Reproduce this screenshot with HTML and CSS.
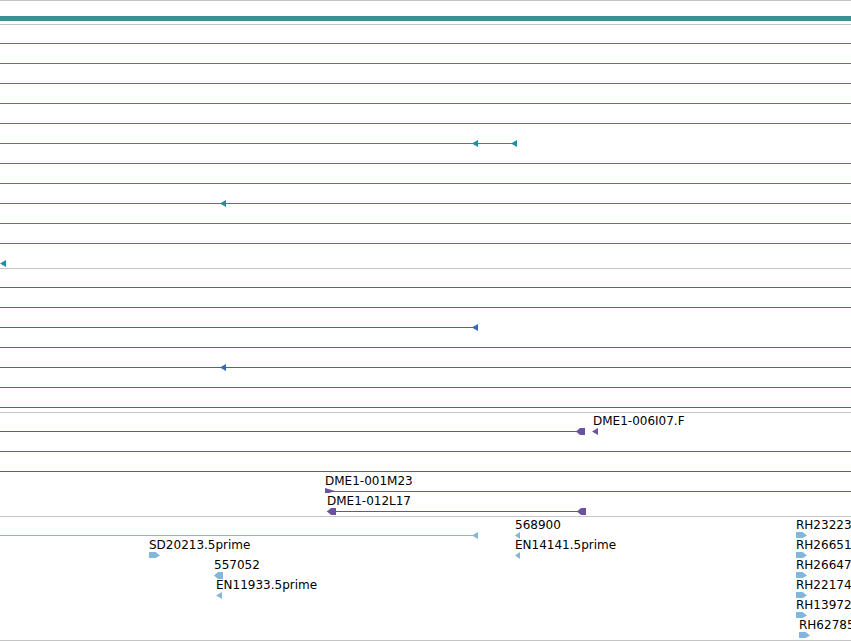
FILE: index.html
```html
<!DOCTYPE HTML>
<html>

<head>
    <meta charset="utf-8">
    <title>tracks</title>
    <link rel="stylesheet" href="styles.css">
</head>

<body>
<div class="view">
    <div class="topline"></div>
    <div class="ruler"></div>

    <!-- track 1 -->
    <div class="track teal">
        <div class="row"><i class="ln full"></i></div>
        <div class="row"><i class="ln full"></i></div>
        <div class="row"><i class="ln full"></i></div>
        <div class="row"><i class="ln full"></i></div>
        <div class="row"><i class="ln full"></i></div>
        <div class="row">
            <i class="ln" style="left:0;width:517px"></i>
            <i class="ar left" style="left:472px"></i>
            <i class="ar left" style="left:511px"></i>
        </div>
        <div class="row"><i class="ln full"></i></div>
        <div class="row"><i class="ln full"></i></div>
        <div class="row">
            <i class="ln full"></i>
            <i class="ar left" style="left:220px"></i>
        </div>
        <div class="row"><i class="ln full"></i></div>
        <div class="row"><i class="ln full"></i></div>
        <div class="row"><i class="ar left" style="left:0"></i></div>
    </div>

    <!-- track 2 -->
    <div class="track blue">
        <div class="row"><i class="ln full"></i></div>
        <div class="row"><i class="ln full"></i></div>
        <div class="row">
            <i class="ln" style="left:0;width:477px"></i>
            <i class="ar left" style="left:472px"></i>
        </div>
        <div class="row"><i class="ln full"></i></div>
        <div class="row">
            <i class="ln full"></i>
            <i class="ar left" style="left:220px"></i>
        </div>
        <div class="row"><i class="ln full"></i></div>
        <div class="row"><i class="ln full"></i></div>
    </div>

    <!-- track 3 -->
    <div class="track purple">
        <div class="row">
            <i class="ln" style="left:0;width:585px"></i>
            <i class="ex left" style="left:576px"></i>
            <i class="ar left" style="left:592px"></i>
            <span class="lbl" style="left:593px">DME1-006I07.F</span>
        </div>
        <div class="row"><i class="ln full"></i></div>
        <div class="row"><i class="ln full"></i></div>
        <div class="row">
            <i class="ln" style="left:325px;right:0"></i>
            <i class="ex flag" style="left:325px"></i>
            <span class="lbl" style="left:325px">DME1-001M23</span>
        </div>
        <div class="row">
            <i class="ln" style="left:327px;width:258px"></i>
            <i class="ex left" style="left:327px"></i>
            <i class="ex left" style="left:577px"></i>
            <span class="lbl" style="left:327px">DME1-012L17</span>
        </div>
    </div>

    <!-- track 4 -->
    <div class="track light">
        <div class="row">
            <i class="ln" style="left:0;width:477px"></i>
            <i class="ar left" style="left:472px"></i>
            <span class="lbl" style="left:515px">568900</span>
            <i class="ar left sm" style="left:515px"></i>
            <span class="lbl" style="left:796px">RH23223</span>
            <i class="ex right" style="left:796px"></i>
        </div>
        <div class="row">
            <span class="lbl" style="left:149px">SD20213.5prime</span>
            <i class="ex right" style="left:149px"></i>
            <span class="lbl" style="left:515px">EN14141.5prime</span>
            <i class="ar left sm" style="left:515px"></i>
            <span class="lbl" style="left:796px">RH26651</span>
            <i class="ex right" style="left:796px"></i>
        </div>
        <div class="row">
            <span class="lbl" style="left:214px">557052</span>
            <i class="ex left" style="left:214px"></i>
            <span class="lbl" style="left:796px">RH26647</span>
            <i class="ex right" style="left:796px"></i>
        </div>
        <div class="row">
            <span class="lbl" style="left:216px">EN11933.5prime</span>
            <i class="ar left" style="left:216px"></i>
            <span class="lbl" style="left:796px">RH22174</span>
            <i class="ex right" style="left:796px"></i>
        </div>
        <div class="row">
            <span class="lbl" style="left:796px">RH13972</span>
            <i class="ex right" style="left:796px"></i>
        </div>
        <div class="row">
            <span class="lbl" style="left:799px">RH62785</span>
            <i class="ex right" style="left:799px"></i>
        </div>
    </div>
    <div class="endline"></div>
</div>
</body>

</html>
```

FILE: styles.css
```css
* {
    margin: 0;
    padding: 0;
}

body {
    background: #fff;
    font-family: "DejaVu Sans", sans-serif;
    font-size: 12px;
    color: #000;
}

.view {
    width: 851px;
    overflow: hidden;
}

.topline {
    height: 1px;
    background: #c4c4c4;
}

.ruler {
    height: 5px;
    margin: 15px 0 3px;
    background: #418d91;
}

.track {
    border-top: 1px solid #c4c4c4;
    padding-bottom: 3px;
}

.teal {
    --c: #1b8fa8;
}

.blue {
    --c: #3668b9;
}

.purple {
    --c: #6a529f;
}

.light {
    --c: #84b6dc;
}

.row {
    height: 20px;
    position: relative;
}

.ln {
    position: absolute;
    top: 18px;
    height: 1px;
    background: var(--c);
}

.ln.full {
    left: 0;
    right: 0;
}

/* strand arrows */
.ar {
    position: absolute;
    top: 15px;
    width: 6px;
    height: 7px;
    background: var(--c);
}

.ar.left {
    clip-path: polygon(0 50%, 100% 0, 100% 100%);
}

.ar.sm {
    width: 5px;
}

/* exon blocks */
.ex {
    position: absolute;
    top: 16px;
    width: 10px;
    height: 5px;
    background: var(--c);
}

.ex.left {
    width: 9px;
    top: 15px;
    height: 7px;
    clip-path: polygon(0 50%, 45% 0, 100% 0, 100% 100%, 45% 100%);
}

.ex.flag {
    top: 15px;
    clip-path: polygon(0 0, 100% 60%, 40% 100%, 0 100%);
}

.ex.right {
    width: 11px;
    top: 15px;
    height: 6px;
    clip-path: polygon(0 0, 60% 0, 100% 60%, 60% 100%, 0 100%);
}

.lbl {
    position: absolute;
    top: 1px;
    line-height: 14px;
    white-space: nowrap;
}

.endline {
    height: 1px;
    background: #c4c4c4;
}
```
